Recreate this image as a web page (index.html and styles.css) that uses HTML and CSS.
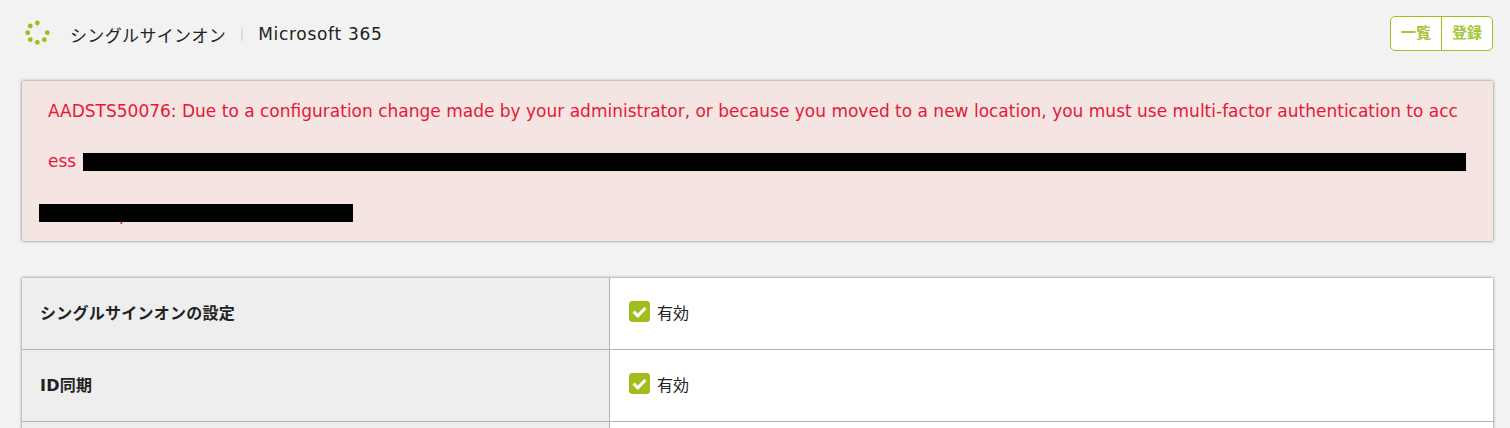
FILE: index.html
```html
<!DOCTYPE html>
<html lang="ja">
<head>
<meta charset="utf-8">
<title>シングルサインオン</title>
<link rel="stylesheet" href="styles.css">
</head>

<body>
  <div id="header">
    <div class="title">
      <svg class="spinner" width="28" height="28" viewBox="0 0 28 28">
        <circle cx="15.3" cy="3" r="2.4"></circle>
        <circle cx="8.3" cy="6" r="2.4"></circle>
        <circle cx="5.7" cy="12.7" r="2.4"></circle>
        <circle cx="8.3" cy="19.7" r="2.4"></circle>
        <circle cx="15.3" cy="22.3" r="2.4"></circle>
        <circle cx="22.3" cy="19.7" r="2.4"></circle>
        <circle cx="25.3" cy="12.7" r="2.4"></circle>
      </svg>
      <span class="page_name">シングルサインオン</span>
      <span class="sep"></span>
      <span class="sub_name">Microsoft 365</span>
    </div>
    <div class="btn_group">
      <div class="btn">一覧</div>
      <div class="btn">登録</div>
    </div>
  </div>

  <div id="alert">
    <p>AADSTS50076: Due to a configuration change made by your administrator, or because you moved to a new location, you must use multi-factor authentication to access <span class="mask mask_long"></span></p>
    <p class="last_line">p</p>
    <span class="mask mask_last"></span>
  </div>

  <div id="settings">
    <div class="row">
      <div class="label">シングルサインオンの設定</div>
      <div class="value">
        <svg class="check" width="21" height="21" viewBox="0 0 21 21">
          <rect width="21" height="21" rx="3.5"></rect>
          <path d="M4.6 10.6l4.2 4.2 7.6-7.8"></path>
        </svg>
        <span>有効</span>
      </div>
    </div>
    <div class="row">
      <div class="label">ID同期</div>
      <div class="value">
        <svg class="check" width="21" height="21" viewBox="0 0 21 21">
          <rect width="21" height="21" rx="3.5"></rect>
          <path d="M4.6 10.6l4.2 4.2 7.6-7.8"></path>
        </svg>
        <span>有効</span>
      </div>
    </div>
    <div class="row row_cut">
      <div class="label"></div>
      <div class="value"></div>
    </div>
  </div>
</body>
</html>
```

FILE: styles.css
```css
html, body {
  background-color: #f2f2f2;
  margin: 0;
  padding: 0;
  height: 428px;
  overflow: hidden;
  color: #222;
  font-family: "DejaVu Sans", "Noto Sans CJK JP", sans-serif;
  font-size: 16px;
}

#header {
  display: flex;
  justify-content: space-between;
  align-items: flex-start;
  height: 81px;
  padding: 16px 17px 0 22px;
  box-sizing: border-box;
}

.title {
  display: flex;
  align-items: center;
  height: 36px;
  font-size: 17px;
  letter-spacing: 0.35px;
}

.sub_name {
  letter-spacing: 0.7px;
}

.spinner {
  fill: #9fbe1c;
  margin-right: 20px;
}

.sep {
  width: 2px;
  height: 14px;
  margin: 0 15px;
  background-color: #ddd;
}

.btn_group {
  display: flex;
  height: 35px;
  background-color: #fff;
  border: #9dc01c 1px solid;
  border-radius: 5px;
  box-sizing: border-box;
}

.btn {
  width: 50px;
  line-height: 33px;
  text-align: center;
  font-weight: bold;
  font-size: 15px;
  color: #a5c63b;
}

.btn + .btn {
  width: 51px;
  border-left: #9dc01c 1px solid;
  box-sizing: border-box;
}

#alert {
  position: relative;
  height: 160px;
  margin: 0 17px 37px 22px;
  padding: 5px 26px 0;
  box-sizing: border-box;
  background-color: #f4e5e2;
  box-shadow: 0 0 3px rgba(0,0,0,0.5);
  color: #e8173a;
  font-size: 17px;
  line-height: 50px;
  word-break: break-all;
}

#alert p {
  margin: 0;
}

.mask {
  background-color: #000;
}

.mask_long {
  display: inline-block;
  width: 1383px;
  height: 18px;
  margin-left: 1px;
  vertical-align: -4px;
}

.mask_last {
  position: absolute;
  left: 17px;
  top: 123px;
  width: 314px;
  height: 18px;
}

#alert .last_line {
  padding: 3px 0 0 71px;
}

#settings {
  margin: 0 17px 0 22px;
  background-color: #fff;
  box-shadow: 0 0 3px rgba(0,0,0,0.5);
}

.row {
  display: flex;
  height: 72px;
  border-bottom: #aab6bc 1px solid;
  box-sizing: border-box;
}

.row_cut {
  border-bottom: none;
}

.label {
  display: flex;
  align-items: center;
  width: 588px;
  padding: 0 0 4px 18px;
  box-sizing: border-box;
  background-color: #eee;
  border-right: #aab6bc 1px solid;
  font-size: 16px;
  font-weight: bold;
  letter-spacing: 0.25px;
}

.value {
  display: flex;
  align-items: center;
  gap: 7px;
  padding: 0 0 4px 19px;
  font-size: 16px;
}

.check rect {
  fill: #9fbe1c;
}

.check path {
  fill: none;
  stroke: #fff;
  stroke-width: 3.2;
}
```
